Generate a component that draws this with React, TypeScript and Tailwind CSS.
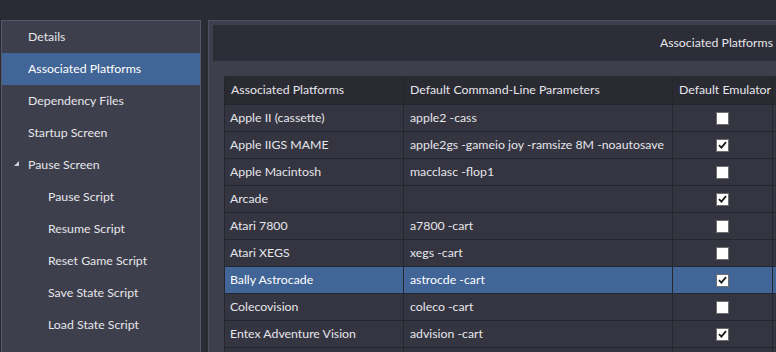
import React from "react";

const navItems = [
  { label: "Details", depth: 0 },
  { label: "Associated Platforms", depth: 0, active: true },
  { label: "Dependency Files", depth: 0 },
  { label: "Startup Screen", depth: 0 },
  { label: "Pause Screen", depth: 0, expanded: true },
  { label: "Pause Script", depth: 1 },
  { label: "Resume Script", depth: 1 },
  { label: "Reset Game Script", depth: 1 },
  { label: "Save State Script", depth: 1 },
  { label: "Load State Script", depth: 1 },
];

const rows = [
  { platform: "Apple II (cassette)", params: "apple2 -cass", def: false },
  { platform: "Apple IIGS MAME", params: "apple2gs -gameio joy -ramsize 8M -noautosave", def: true },
  { platform: "Apple Macintosh", params: "macclasc -flop1", def: false },
  { platform: "Arcade", params: "", def: true },
  { platform: "Atari 7800", params: "a7800 -cart", def: false },
  { platform: "Atari XEGS", params: "xegs -cart", def: false },
  { platform: "Bally Astrocade", params: "astrocde -cart", def: true, selected: true },
  { platform: "Colecovision", params: "coleco -cart", def: false },
  { platform: "Entex Adventure Vision", params: "advision -cart", def: true },
];

const Checkbox = ({ checked }: { checked: boolean }) => (
  <div className="flex h-[13px] w-[13px] items-center justify-center border border-[#6e6e6e] bg-white">
    {checked && (
      <svg width="9" height="8" viewBox="0 0 9 8">
        <path d="M1 4.2 L3.4 6.6 L8 1.2" fill="none" stroke="#1c1c1c" strokeWidth="1.8" />
      </svg>
    )}
  </div>
);

const cols = "grid grid-cols-[179px_269px_100px_40px]";
const line = "border-r border-[#25262e]";

export default function App() {
  return (
    <div
      className="flex h-[352px] w-[776px] overflow-hidden bg-[#2b2b35] pt-[20px] text-[12.3px] text-[#e6e6ea]"
      style={{ fontFamily: 'Lato, "Noto Sans", sans-serif' }}
    >
      <nav className="ml-[1px] w-[200px] shrink-0 border border-b-0 border-[#55576a] bg-[#3e3f4c]">
        {navItems.map((item) => (
          <div
            key={item.label}
            className={
              "relative flex h-[32px] items-center pt-[1px] " +
              (item.depth ? "pl-[46px] " : "pl-[26px] ") +
              (item.active ? "bg-[#416596] text-white" : "")
            }
          >
            {item.expanded && (
              <svg className="absolute left-[12px] top-[12px]" width="6" height="6" viewBox="0 0 6 6">
                <path d="M5 0 L5 5 L0 5 Z" fill="#d0d0d6" />
              </svg>
            )}
            {item.label}
          </div>
        ))}
      </nav>
      <main className="ml-[7px] min-w-0 flex-1 overflow-hidden border border-r-0 border-b-0 border-[#4f5163] bg-[#3e3f4c] pl-[4px] pt-[4px]">
        <div className="flex h-[36px] items-center justify-end bg-[#2c2d37] pr-[3px]">
          <span className="whitespace-nowrap">Associated Platforms</span>
        </div>
        <div className="ml-[11px] mt-[15px] w-[600px] border-l border-[#25262e]">
          <div className={cols + " h-[28px] bg-[#2a2a33]"}>
            <div className={"flex items-center pl-[6px] " + line}>Associated Platforms</div>
            <div className={"flex items-center pl-[6px] " + line}>Default Command-Line Parameters</div>
            <div className={"flex items-center whitespace-nowrap pl-[6px] " + line}>Default Emulator</div>
            <div />
          </div>
          {rows.map((r) => (
            <div
              key={r.platform}
              className={
                cols +
                " h-[27px] border-t border-[#25262e] " +
                (r.selected ? "bg-[#416596] text-white" : "bg-[#343541]")
              }
            >
              <div className={"flex items-center whitespace-nowrap pl-[5px] " + line}>{r.platform}</div>
              <div className={"flex items-center whitespace-nowrap pl-[6px] " + line}>{r.params}</div>
              <div className={"flex items-center justify-center " + line}>
                <Checkbox checked={r.def} />
              </div>
              <div />
            </div>
          ))}
          <div className={cols + " h-[27px] border-t border-[#25262e] bg-[#343541]"}>
            <div className={line} />
            <div className={line} />
            <div className={line} />
            <div />
          </div>
        </div>
      </main>
    </div>
  );
}
